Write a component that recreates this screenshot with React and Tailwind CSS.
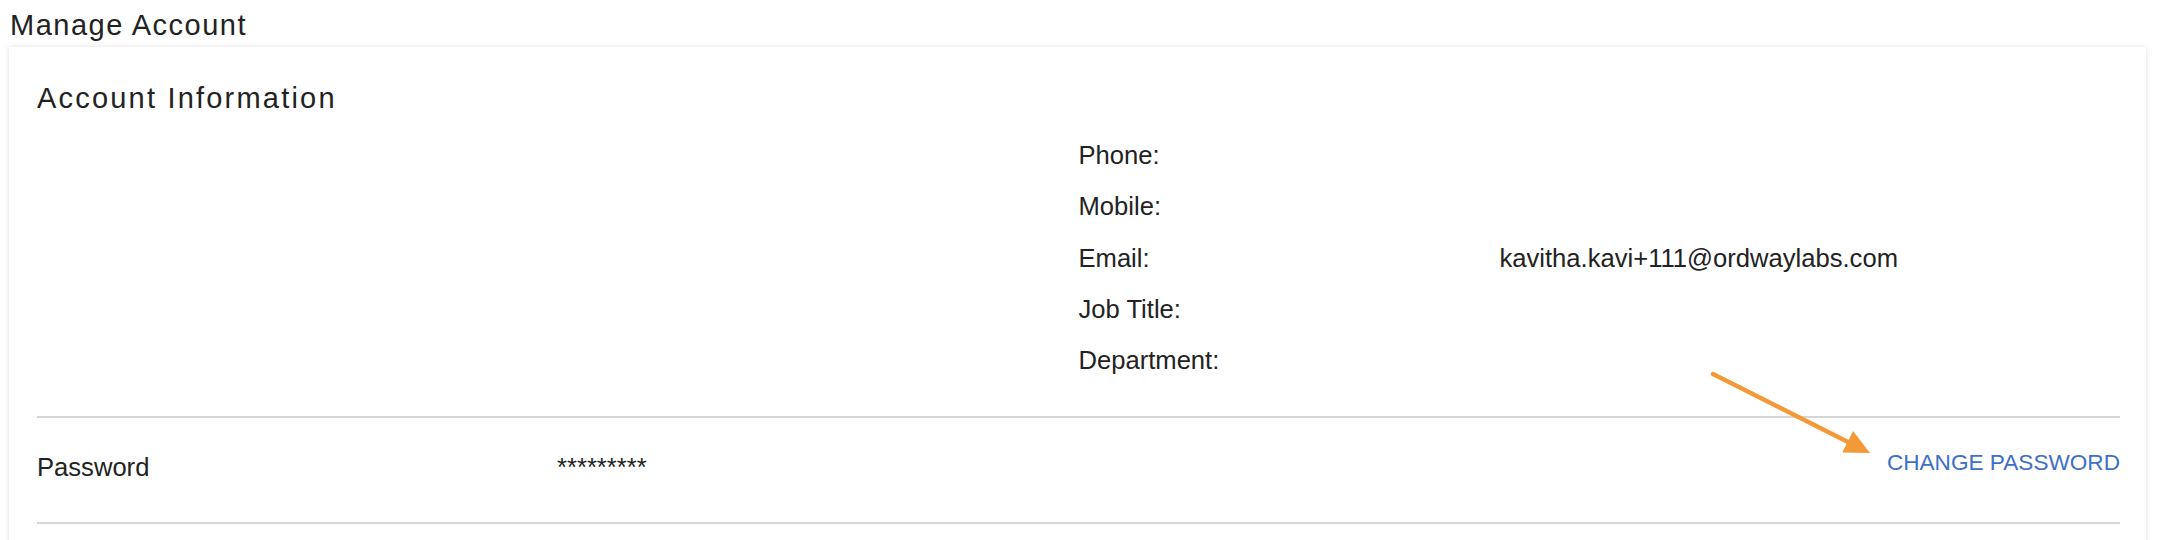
const contactRows = [
  { label: "Phone:", value: "" },
  { label: "Mobile:", value: "" },
  { label: "Email:", value: "kavitha.kavi+111@ordwaylabs.com" },
  { label: "Job Title:", value: "" },
  { label: "Department:", value: "" },
];

function PointerArrow() {
  return (
    <svg
      className="absolute left-[1700px] top-[322px]"
      width="170"
      height="92"
      viewBox="0 0 170 92"
    >
      <line x1="4" y1="5" x2="141" y2="74" stroke="#f29a38" strokeWidth="4.5" strokeLinecap="round" />
      <polygon points="161,84 133.3,83.5 144.1,62.1" fill="#f29a38" />
    </svg>
  );
}

export default function App() {
  return (
    <div className="min-h-screen bg-white text-[#222] font-['Liberation_Sans',Arial,sans-serif]">
      <h1 className="pt-[8px] pl-[10px] text-[29px] leading-[34px] tracking-[1.5px] font-normal text-[#222]">
        Manage Account
      </h1>

      <div className="relative mt-[5px] ml-[9px] mr-[12px] bg-white pl-[28px] pr-[26px] pt-[34px] pb-[40px] shadow-[0_0_5px_rgba(0,0,0,0.13)]">
        <h2 className="text-[29px] leading-[34px] tracking-[2.2px] font-normal text-[#222]">
          Account Information
        </h2>

        <div className="mt-[15px] grid grid-cols-2">
          <div />
          <div className="flex flex-col text-[25.6px] leading-[51.3px]">
            {contactRows.map((row) => (
              <div key={row.label} className="flex">
                <span className="w-[421px] shrink-0">{row.label}</span>
                <span>{row.value}</span>
              </div>
            ))}
          </div>
        </div>

        <div className="mt-[30px] border-t-2 border-[#d6d6d6]" />

        <div className="flex h-[104px] items-start">
          <span className="w-[520px] shrink-0 pt-[35px] text-[25.6px] leading-[29.4px]">Password</span>
          <span className="flex-1 pt-[35px] text-[25.6px] leading-[29.4px]">*********</span>
          <button className="pt-[32px] text-[22.6px] leading-[25.6px] text-[#3d6fc6] uppercase">
            Change Password
          </button>
        </div>

        <div className="border-t-2 border-[#d6d6d6]" />

        <PointerArrow />
      </div>
    </div>
  );
}
